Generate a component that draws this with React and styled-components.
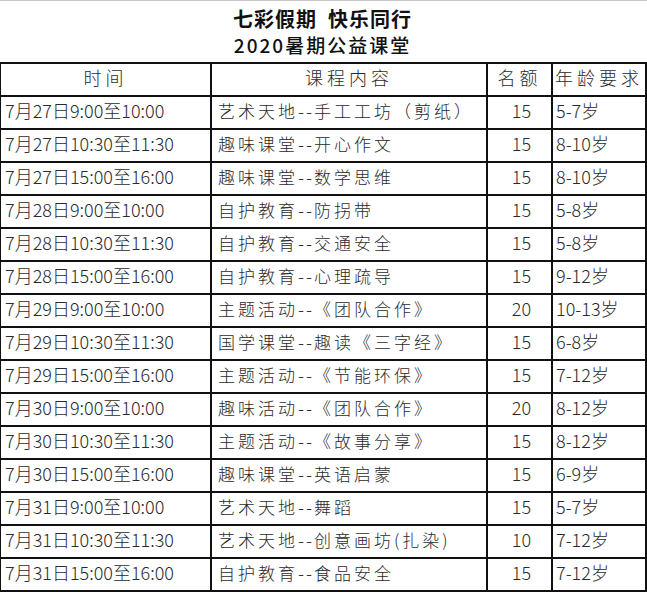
import React from 'react'
import styled, { createGlobalStyle } from 'styled-components'

const GlobalStyle = createGlobalStyle`
  html, body {
    margin: 0;
    padding: 0;
    background: #fff;
  }
  body {
    font-family: "Noto Sans CJK SC", "DejaVu Sans", sans-serif;
    color: #1e1e1e;
  }
`

const Sheet = styled.div`
  width: 647px;
  height: 592px;
  overflow: hidden;
  border-top: 1px solid #c8c8c8;
  box-sizing: border-box;
`

const Title = styled.div`
  height: 61px;
  display: flex;
  flex-direction: column;
  align-items: center;
  justify-content: center;
  padding-right: 2px;
`

const TitleMain = styled.div`
  font-size: 20px;
  font-weight: 700;
  line-height: 26px;
  letter-spacing: 1px;
  color: #111;
`

const TitleSub = styled.div`
  font-size: 19px;
  font-weight: 500;
  line-height: 26px;
  letter-spacing: 2px;
  color: #111;
`

const Table = styled.table`
  border-collapse: collapse;
  table-layout: fixed;
  width: 646px;
  margin-left: -1px;
`

const Row = styled.tr`
  height: 33px;
`

const Cell = styled.td`
  border: 2px solid #111;
  padding: 0 0 5px ${(p) => p.$pad || 4}px;
  font-size: ${(p) => p.$size || 18}px;
  font-weight: 300;
  line-height: 24px;
  white-space: nowrap;
  overflow: hidden;
  text-align: ${(p) => p.$align || 'left'};
  letter-spacing: ${(p) => p.$spacing || 0}px;
  color: #2a2a2a;
`

const HeadCell = styled(Cell)`
  text-align: center;
  letter-spacing: 4px;
  padding: 0 0 5px 0;
`

const Dash = styled.span`
  letter-spacing: 2px;
  font-size: 18px;
`

const rows = [
  ['7月27日9:00至10:00', '艺术天地', '手工工坊（剪纸）', '15', '5-7岁'],
  ['7月27日10:30至11:30', '趣味课堂', '开心作文', '15', '8-10岁'],
  ['7月27日15:00至16:00', '趣味课堂', '数学思维', '15', '8-10岁'],
  ['7月28日9:00至10:00', '自护教育', '防拐带', '15', '5-8岁'],
  ['7月28日10:30至11:30', '自护教育', '交通安全', '15', '5-8岁'],
  ['7月28日15:00至16:00', '自护教育', '心理疏导', '15', '9-12岁'],
  ['7月29日9:00至10:00', '主题活动', '《团队合作》', '20', '10-13岁'],
  ['7月29日10:30至11:30', '国学课堂', '趣读《三字经》', '15', '6-8岁'],
  ['7月29日15:00至16:00', '主题活动', '《节能环保》', '15', '7-12岁'],
  ['7月30日9:00至10:00', '趣味活动', '《团队合作》', '20', '8-12岁'],
  ['7月30日10:30至11:30', '主题活动', '《故事分享》', '15', '8-12岁'],
  ['7月30日15:00至16:00', '趣味课堂', '英语启蒙', '15', '6-9岁'],
  ['7月31日9:00至10:00', '艺术天地', '舞蹈', '15', '5-7岁'],
  ['7月31日10:30至11:30', '艺术天地', '创意画坊(扎染)', '10', '7-12岁'],
  ['7月31日15:00至16:00', '自护教育', '食品安全', '15', '7-12岁'],
]

export default function App() {
  return (
    <>
      <GlobalStyle />
      <Sheet>
        <Title>
          <TitleMain>七彩假期&nbsp;&nbsp;快乐同行</TitleMain>
          <TitleSub>2020暑期公益课堂</TitleSub>
        </Title>
        <Table>
          <colgroup>
            <col style={{ width: 211 }} />
            <col style={{ width: 276 }} />
            <col style={{ width: 65 }} />
            <col style={{ width: 94 }} />
          </colgroup>
          <thead>
            <Row>
              <HeadCell>时间</HeadCell>
              <HeadCell>课程内容</HeadCell>
              <HeadCell>名额</HeadCell>
              <HeadCell>年龄要求</HeadCell>
            </Row>
          </thead>
          <tbody>
            {rows.map(([time, theme, course, quota, age]) => (
              <Row key={time}>
                <Cell $pad={4}>{time}</Cell>
                <Cell $pad={6} $spacing={3} $size={17}>
                  {theme}
                  <Dash>--</Dash>
                  {course}
                </Cell>
                <Cell $align="center" $pad={0}>{quota}</Cell>
                <Cell $pad={3}>{age}</Cell>
              </Row>
            ))}
          </tbody>
        </Table>
      </Sheet>
    </>
  )
}
